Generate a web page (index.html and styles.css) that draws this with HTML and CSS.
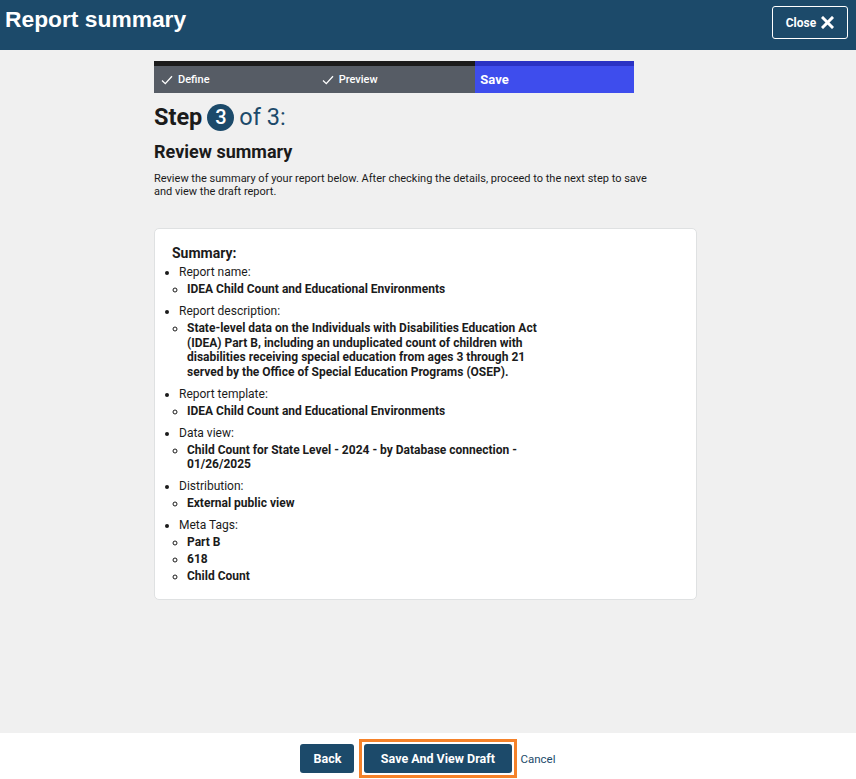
FILE: index.html
```html
<!DOCTYPE html>
<html lang="en">
<head>
    <meta charset="UTF-8">
    <meta name="viewport" content="width=device-width, initial-scale=1.0">
    <title>Report summary</title>
    <link rel="stylesheet" href="styles.css">
</head>
<body>
    <div class="page">
        <header class="topbar">
            <h1>Report summary</h1>
            <button class="close-btn">
                Close
                <svg width="13" height="13" viewBox="0 0 13 13" aria-hidden="true">
                    <path d="M2 2 L11 11 M11 2 L2 11" stroke="#fff" stroke-width="3" stroke-linecap="square"/>
                </svg>
            </button>
        </header>

        <main class="content">
            <div class="column">
                <ol class="stepper">
                    <li class="step done">
                        <svg width="12" height="10" viewBox="0 0 12 10" aria-hidden="true">
                            <path d="M1 5.5 L4.3 8.6 L11 1.2" fill="none" stroke="#fff" stroke-width="1.3"/>
                        </svg>
                        Define
                    </li>
                    <li class="step done">
                        <svg width="12" height="10" viewBox="0 0 12 10" aria-hidden="true">
                            <path d="M1 5.5 L4.3 8.6 L11 1.2" fill="none" stroke="#fff" stroke-width="1.3"/>
                        </svg>
                        Preview
                    </li>
                    <li class="step current">Save</li>
                </ol>

                <h2 class="step-heading">
                    <span class="step-word">Step</span>
                    <span class="step-num">3</span>
                    <span class="step-of">of 3:</span>
                </h2>

                <h3 class="section-title">Review summary</h3>
                <p class="intro">Review the summary of your report below. After checking the details, proceed to the next step to save and view the draft report.</p>

                <div class="card">
                    <h4>Summary:</h4>
                    <ul class="summary-list">
                        <li>Report name:
                            <ul><li>IDEA Child Count and Educational Environments</li></ul>
                        </li>
                        <li>Report description:
                            <ul><li>State-level data on the Individuals with Disabilities Education Act (IDEA) Part B, including an unduplicated count of children with disabilities receiving special education from ages 3 through 21 served by the Office of Special Education Programs (OSEP).</li></ul>
                        </li>
                        <li>Report template:
                            <ul><li>IDEA Child Count and Educational Environments</li></ul>
                        </li>
                        <li>Data view:
                            <ul><li>Child Count for State Level - 2024 - by Database connection - 01/26/2025</li></ul>
                        </li>
                        <li>Distribution:
                            <ul><li>External public view</li></ul>
                        </li>
                        <li>Meta Tags:
                            <ul>
                                <li>Part B</li>
                                <li>618</li>
                                <li>Child Count</li>
                            </ul>
                        </li>
                    </ul>
                </div>
            </div>
        </main>

        <footer class="actions">
            <button class="btn">Back</button>
            <span class="focus-ring">
                <button class="btn btn-wide">Save And View Draft</button>
            </span>
            <a href="#" class="cancel">Cancel</a>
        </footer>
    </div>
</body>
</html>
```

FILE: styles.css
```css
* {
    box-sizing: border-box;
}

body {
    margin: 0;
    font-family: 'Roboto', 'Liberation Sans', sans-serif;
    color: #1b1b1b;
    background-color: #f0f0f0;
}

.page {
    display: flex;
    flex-direction: column;
    height: 779px;
}

.topbar {
    display: flex;
    justify-content: space-between;
    align-items: flex-start;
    height: 50px;
    background-color: #1c4a6a;
    padding: 6px 8px 0 5px;
}

.topbar h1 {
    margin: 0;
    color: #fff;
    font-family: 'Liberation Sans', sans-serif;
    font-size: 22.8px;
    font-weight: 700;
    line-height: 27px;
}

.close-btn {
    display: flex;
    align-items: center;
    justify-content: center;
    gap: 5px;
    width: 76px;
    height: 33px;
    background: transparent;
    border: 1px solid #fff;
    border-radius: 3px;
    color: #fff;
    font-family: 'Roboto', sans-serif;
    font-size: 12px;
    font-weight: 700;
    cursor: pointer;
}

.content {
    flex: 1;
    padding-top: 11px;
}

.column {
    width: 543px;
    margin-left: 154px;
}

.stepper {
    display: flex;
    width: 480px;
    margin: 0;
    padding: 0;
    list-style: none;
}

.step {
    flex: 1;
    display: flex;
    align-items: center;
    gap: 5px;
    height: 32px;
    padding-left: 7px;
    color: #fff;
    font-size: 11px;
    font-weight: 500;
    background-color: #565c65;
    border-top: 5px solid #1b1b1b;
}

.step.current {
    padding-left: 5px;
    background-color: #3e4ded;
    border-top-color: #2a32c4;
    font-size: 13px;
    font-weight: 700;
}

.step-heading {
    display: flex;
    align-items: center;
    gap: 5px;
    margin: 10px 0 0;
    font-size: 23.5px;
    line-height: 28px;
}

.step-word {
    font-weight: 700;
}

.step-num {
    display: inline-flex;
    align-items: center;
    justify-content: center;
    width: 27px;
    height: 27px;
    border-radius: 50%;
    background-color: #1c4a6a;
    color: #fff;
    font-size: 20px;
    font-weight: 500;
}

.step-of {
    color: #1c4a6a;
    font-weight: 400;
}

.section-title {
    margin: 10px 0 0;
    font-size: 18px;
    font-weight: 700;
    line-height: 22px;
}

.intro {
    max-width: 510px;
    margin: 9px 0 0;
    font-size: 11px;
    line-height: 13px;
}

.card {
    margin-top: 30px;
    padding: 15px 16px 15px;
    background-color: #fff;
    border: 1px solid #dfe1e2;
    border-radius: 5px;
}

.card h4 {
    margin: 0 0 0 1px;
    font-size: 14px;
    font-weight: 700;
    line-height: 18px;
}

.summary-list {
    max-width: 390px;
    margin: 0;
    padding-left: 8px;
    font-size: 12px;
    line-height: 15px;
}

.summary-list > li {
    margin-top: 3px;
}

.summary-list > li + li {
    margin-top: 7.5px;
}

.summary-list ul {
    margin: 2px 0 0;
    padding-left: 8px;
    list-style-type: circle;
}

.summary-list ul li {
    font-weight: 700;
    line-height: 14.5px;
}

.summary-list ul li + li {
    margin-top: 2.5px;
}

.actions {
    display: flex;
    justify-content: center;
    align-items: center;
    gap: 5px;
    height: 46px;
    padding-top: 5px;
    background-color: #fff;
}

.btn {
    height: 29px;
    padding: 0 13px;
    border: none;
    border-radius: 3px;
    background-color: #1c4a6a;
    color: #fff;
    font-family: 'Roboto', sans-serif;
    font-size: 12.5px;
    font-weight: 700;
    cursor: pointer;
}

.btn-wide {
    padding: 0 16.5px;
}

.focus-ring {
    display: flex;
    padding: 2px;
    border: 3px solid #f5822a;
}

.cancel {
    margin-left: -1px;
    color: #1c4a6a;
    font-size: 11.5px;
    text-decoration: none;
}
```
